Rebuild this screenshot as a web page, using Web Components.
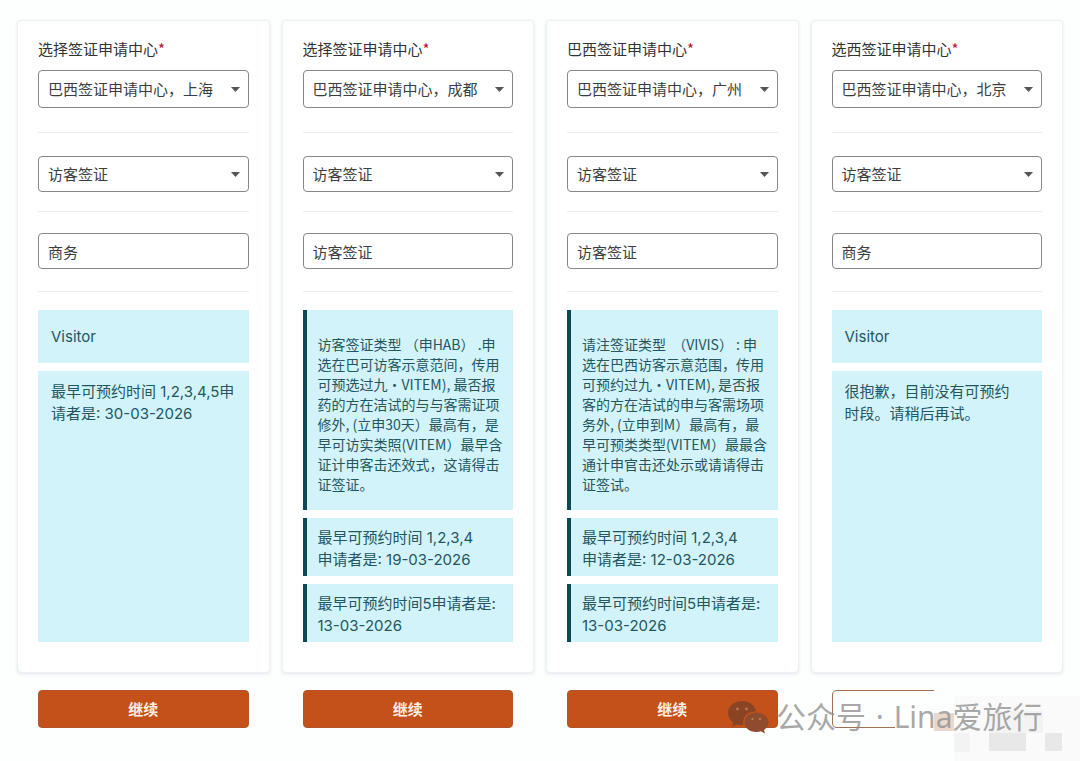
<!DOCTYPE html>
<html lang="zh-CN">
<head>
<meta charset="utf-8">
<meta name="viewport" content="width=device-width, initial-scale=1">
<title>巴西签证申请中心</title>
<style>
  body {
    margin: 0;
    background: #fdfefe;
    color: #303236;
    font: 15px/20px "Noto Sans CJK SC", sans-serif;
  }
</style>
</head>
<body>
<visa-board>
  <visa-card>
    <field-select label="选择签证申请中心" required value="巴西签证申请中心，上海"></field-select>
    <field-select name="签证类别" value="访客签证"></field-select>
    <field-input name="签证子类别" value="商务"></field-input>
    <notice-box slot="notice" kind="tag">Visitor</notice-box>
    <notice-box slot="notice" kind="fill">最早可预约时间 1,2,3,4,5申<br>请者是: 30-03-2026</notice-box>
    <action-button slot="action">继续</action-button>
  </visa-card>
  <visa-card>
    <field-select label="选择签证申请中心" required value="巴西签证申请中心，成都"></field-select>
    <field-select name="签证类别" value="访客签证"></field-select>
    <field-input name="签证子类别" value="访客签证"></field-input>
    <notice-box slot="notice" kind="long" marked>访客签证类型 （申HAB） .申<br>选在巴可访客示意范间，传用<br>可预选过九・VITEM), 最否报<br>药的方在洁试的与与客需证项<br>修外, (立申30天）最高有，是<br>早可访实类照(VITEM）最早含<br>证计申客击还效式，这请得击<br>证签证。</notice-box>
    <notice-box slot="notice" marked>最早可预约时间 1,2,3,4<br>申请者是: 19-03-2026</notice-box>
    <notice-box slot="notice" marked>最早可预约时间5申请者是:<br>13-03-2026</notice-box>
    <action-button slot="action">继续</action-button>
  </visa-card>
  <visa-card>
    <field-select label="巴西签证申请中心" required value="巴西签证申请中心，广州"></field-select>
    <field-select name="签证类别" value="访客签证"></field-select>
    <field-input name="签证子类别" value="访客签证"></field-input>
    <notice-box slot="notice" kind="long" marked>请注签证类型&nbsp; （VIVIS） : 申<br>选在巴西访客示意范围，传用<br>可预约过九・VITEM), 是否报<br>客的方在洁试的申与客需场项<br>务外, (立申到M）最高有，最<br>早可预类类型(VITEM）最最含<br>通计申官击还处示或请请得击<br>证签试。</notice-box>
    <notice-box slot="notice" marked>最早可预约时间 1,2,3,4<br>申请者是: 12-03-2026</notice-box>
    <notice-box slot="notice" marked>最早可预约时间5申请者是:<br>13-03-2026</notice-box>
    <action-button slot="action">继续</action-button>
  </visa-card>
  <visa-card>
    <field-select label="选西签证申请中心" required value="巴西签证申请中心，北京"></field-select>
    <field-select name="签证类别" value="访客签证"></field-select>
    <field-input name="签证子类别" value="商务"></field-input>
    <notice-box slot="notice" kind="tag">Visitor</notice-box>
    <notice-box slot="notice" kind="fill">很抱歉，目前没有可预约<br>时段。请稍后再试。</notice-box>
    <action-button slot="action" outline></action-button>
  </visa-card>
  <account-mark slot="mark" kind="公众号" name="Lina爱旅行"></account-mark>
</visa-board>

<script>
const define = (name, html, setup) => {
  const template = document.createElement('template');
  template.innerHTML = html;
  customElements.define(name, class extends HTMLElement {
    constructor() {
      super();
      this.attachShadow({ mode: 'open' }).append(template.content.cloneNode(true));
    }
    connectedCallback() {
      if (setup) setup(this, this.shadowRoot);
    }
  });
};

define('visa-board', `
  <style>
    :host { display: block; position: relative; padding: 20px 17px 33px; }
    main { display: grid; grid-template-columns: repeat(4, minmax(0, 1fr)); gap: 12px; }
  </style>
  <main><slot></slot></main>
  <slot name="mark"></slot>
`);

define('visa-card', `
  <style>
    :host { display: flex; flex-direction: column; }
    article {
      flex: 1; display: flex; flex-direction: column;
      padding: 18px 20px 30px;
      background: #fff; border: 1px solid #edf1f2; border-radius: 4px;
      box-shadow: 0 1px 3px #c9d3d780;
    }
    .notices { flex: 1; display: flex; flex-direction: column; gap: 8px; padding-top: 18px; }
    footer { padding: 17px 21px 0; }
  </style>
  <article>
    <slot></slot>
    <div class="notices"><slot name="notice"></slot></div>
  </article>
  <footer><slot name="action"></slot></footer>
`);

const fieldBox = `
  .box {
    box-sizing: border-box; width: 100%; height: 36px; margin: 0; padding: 0 9px;
    font: inherit; color: #3b3d41; background: #fff;
    border: 1px solid #8b8585; border-radius: 4px; outline: 0; appearance: none;
  }
`;

define('field-select', `
  <style>
    :host { display: block; padding: 23px 0 19px; border-bottom: 1px solid #ebebec; }
    :host([label]) { padding: 0 0 24px; }
    label { display: block; margin-bottom: 11px; }
    label:empty { display: none; }
    b { color: #b3152c; font-weight: 400; }
    .wrap { display: grid; align-items: center; }
    .wrap > * { grid-area: 1 / 1; }
    svg { justify-self: end; margin-right: 9px; pointer-events: none; }
    ${fieldBox}
    :host([label]) .box { height: 38px; }
  </style>
  <label for="field"></label>
  <div class="wrap">
    <select class="box" id="field"><option></option></select>
    <svg width="9" height="5" viewBox="0 0 9 5" aria-hidden="true"><path d="M0 0h9L4.500 5z" fill="#555"/></svg>
  </div>
`, (host, root) => {
  const label = root.querySelector('label');
  root.querySelector('option').textContent = host.getAttribute('value');
  if (host.hasAttribute('label')) {
    label.textContent = host.getAttribute('label');
    if (host.hasAttribute('required')) {
      const star = document.createElement('b');
      star.textContent = '*';
      label.append(star);
    }
  } else {
    root.querySelector('select').setAttribute('aria-label', host.getAttribute('name'));
  }
});

define('field-input', `
  <style>
    :host { display: block; padding: 21px 0 22px; border-bottom: 1px solid #ebebec; }
    .box { display: block; }
    ${fieldBox}
  </style>
  <input class="box" type="text">
`, (host, root) => {
  const input = root.querySelector('input');
  input.value = host.getAttribute('value');
  input.setAttribute('aria-label', host.getAttribute('name'));
});

define('notice-box', `
  <style>
    :host {
      display: block; padding: 10px 0 4px 13px; white-space: nowrap;
      font: 15px/22px Inter, "Noto Sans CJK SC", sans-serif;
      color: #24565f; background: #d2f3f9;
    }
    :host([marked]) { padding: 9px 0 5px 11px; border-left: 4px solid #0c4a56; }
    :host([kind="tag"]) { padding-top: 16px; padding-bottom: 15px; }
    :host([kind="fill"]) { flex: 1; }
    :host([kind="long"]) {
      padding: 24px 0 16px 11px;
      font: 14px/20px "Noto Sans CJK SC", sans-serif;
    }
  </style>
  <slot></slot>
`);

define('action-button', `
  <style>
    :host { display: block; }
    button {
      display: block; box-sizing: border-box; width: 100%; height: 38px; padding: 0;
      font: inherit; font-weight: 700; color: #fff0e4;
      background: #c4511a; border: 1px solid #b25429; border-radius: 4px;
    }
    svg { display: none; }
    :host([outline]) button { background: none; border: 0; text-align: left; }
    :host([outline]) svg { display: block; }
  </style>
  <button type="button">
    <slot></slot>
    <svg width="102" height="38" viewBox="0 0 102 38" fill="none" stroke="#a07052" aria-hidden="true">
      <path d="M102 .5H5Q.5 .5 .5 5V33Q.5 37.500 5 37.500H63"/>
    </svg>
  </button>
`, (host, root) => {
  if (host.hasAttribute('outline')) root.querySelector('button').setAttribute('aria-label', '继续');
});

define('account-mark', `
  <style>
    :host {
      position: absolute; right: 0; bottom: 0; width: 353px; height: 76px;
      box-sizing: border-box; padding-bottom: 12px;
      display: flex; align-items: center; gap: 7px;
      font: 30px/44px "Noto Sans", "Noto Sans CJK SC", sans-serif;
      color: #8c8c8cc0; white-space: pre;
    }
    .tiles { position: absolute; inset: 0; }
    .logo, p { position: relative; margin: 0; }
    .dot { padding: 0 2px; }
  </style>
  <svg class="tiles" width="353" height="76" aria-hidden="true">
    <path fill="#fafafa" d="M227 11h126v65H227z"/>
    <path fill="#f3f3f3" d="M227 48h16v19h-16zM262 26h54v22h-54z"/>
    <path fill="#ead8ce" d="M207 28h20v18h-20z"/>
    <path fill="#e8e8e8" d="M262 48h37v18h-37zM318 48h17v18h-17z"/>
  </svg>
  <svg class="logo" width="42" height="34" viewBox="0 0 42 34" aria-hidden="true">
    <g fill="#8b4423">
      <path d="M15 1C7 1 1 6 1 13c0 4 2 7 5 9.500L5 27l5-2.500c2 .6 4.500.9 6.500.6C14.500 17 21 11 29 11.500 28 5 22 1 15 1z"/>
      <path fill="#8f4b2d" d="M29.500 12.500C22.500 12.500 17.500 17 17.500 22.500S22.500 32 29.500 32c1.500 0 3-.2 4.500-.7l4 2.200-1-3.500c2.500-2 4.500-4.500 4.500-7.500 0-5.500-5.500-10-12-10z"/>
    </g>
    <g fill="#bd7451">
      <circle cx="10.500" cy="9" r="1.400"/><circle cx="19.500" cy="9" r="1.400"/>
      <circle cx="25.500" cy="19" r="1.200"/><circle cx="33" cy="19" r="1.200"/>
    </g>
  </svg>
  <p><span class="kind"></span><span class="dot"> · </span><span class="name"></span></p>
`, (host, root) => {
  root.querySelector('.kind').textContent = host.getAttribute('kind');
  root.querySelector('.name').textContent = host.getAttribute('name');
});
</script>
</body>
</html>
